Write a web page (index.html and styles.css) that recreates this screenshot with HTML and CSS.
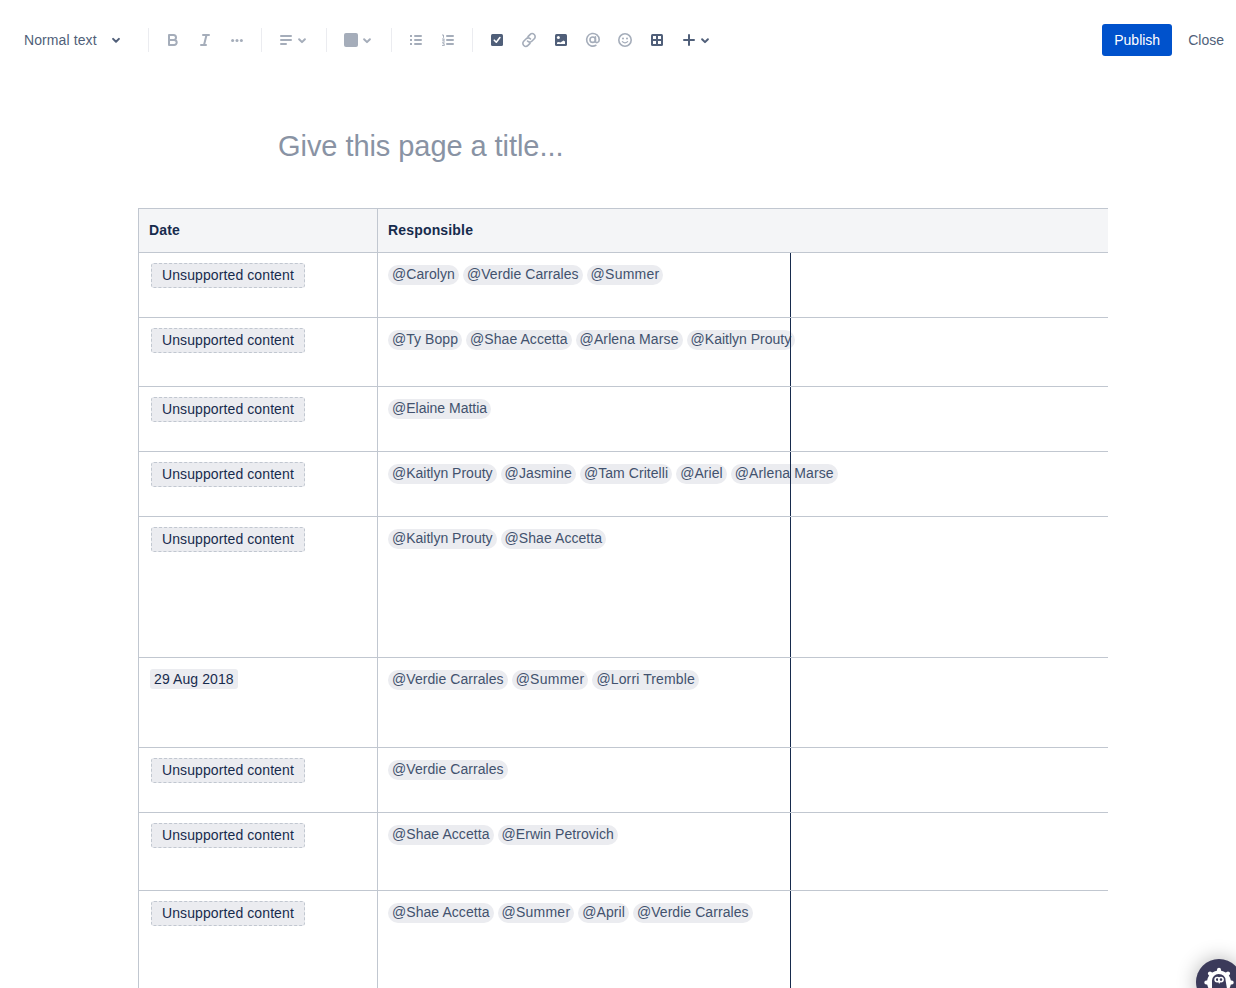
FILE: index.html
```html
<!DOCTYPE html>
<html lang="en">
<head>
<meta charset="utf-8">
<title>Page editor</title>
<link rel="stylesheet" href="styles.css">
</head>
<body>
<header class="toolbar">
  <button class="block-type"><span>Normal text</span><svg width="8" height="6" viewBox="0 0 8 6"><path class="line thick" d="M1.1 1.9 4 4.8l2.9-2.9"/></svg></button>
  <div class="group format muted">
    <svg width="32" height="32" viewBox="0 0 32 32"><path class="line thick" d="M12 11h4.5a2.3 2.3 0 0 1 0 5H12zM12 16h5.2a2.5 2.5 0 0 1 0 5H12z"/></svg>
    <svg width="32" height="32" viewBox="0 0 32 32"><path class="line thick" d="M14 11h6M12 21h5M17.5 11l-2.5 10"/></svg>
    <svg width="32" height="32" viewBox="0 0 32 32"><circle cx="11.6" cy="16.5" r="1.5"/><circle cx="16" cy="16.5" r="1.5"/><circle cx="20.4" cy="16.5" r="1.5"/></svg>
  </div>
  <div class="group align muted">
    <svg width="48" height="32" viewBox="0 0 48 32"><path class="line thick" d="M11 12h10M11 16h10M11 20h5M29.1 15.2l2.9 2.9 2.9-2.9"/></svg>
  </div>
  <div class="group color muted">
    <svg width="48" height="32" viewBox="0 0 48 32"><rect x="9" y="9" width="14" height="14" rx="2"/><path class="line thick" d="M29.1 15.2l2.9 2.9 2.9-2.9"/></svg>
  </div>
  <div class="group lists muted">
    <svg width="32" height="32" viewBox="0 0 32 32"><path class="line thick" d="M15 12h6M15 16h6M15 20h6"/><path d="M10 11h2v2h-2zM10 15h2v2h-2zM10 19h2v2h-2z"/></svg>
    <svg width="32" height="32" viewBox="0 0 32 32"><path class="line thick" d="M15 12h6M15 16h6M15 20h6"/><path class="line thin" d="M10.4 11h1.1v2.4M10.4 15h2L10.6 17h2M10.4 18.8h2l-1 1.2q1.4.1 1 1.4h-2"/></svg>
  </div>
  <div class="group insert">
    <svg width="32" height="32" viewBox="0 0 32 32"><rect x="10" y="10" width="12" height="12" rx="1.5"/><path class="line white" d="m13.3 16.2 2 2 3.6-4.6"/></svg>
    <svg class="muted" width="32" height="32" viewBox="0 0 32 32"><path class="line" d="m15 12.6 2-2a2.9 2.9 0 0 1 4.3 4.2l-2.5 2.5a2.9 2.9 0 0 1-4.3-.2M17 19.4l-2 2a2.9 2.9 0 0 1-4.3-4.2l2.5-2.5a2.9 2.9 0 0 1 4.3.2"/></svg>
    <svg width="32" height="32" viewBox="0 0 32 32"><rect x="10" y="10" width="12" height="12" rx="1.5"/><circle class="cut" cx="13.4" cy="13.5" r="1.5"/><path class="cut" d="M12 20v-1.5l1.8-.6 1.7.6 3-2 1.5 1V20z"/></svg>
    <svg class="muted" width="32" height="32" viewBox="0 0 32 32"><circle class="line" cx="15.7" cy="15.7" r="2.7"/><path class="line" d="M18.4 12.7v4.2c0 2.8 3.8 2.1 3.8-1.2a6.3 6.3 0 1 0-3.3 5.6"/></svg>
    <svg class="muted" width="32" height="32" viewBox="0 0 32 32"><circle class="line" cx="16" cy="16" r="6.2"/><circle cx="14" cy="14.5" r="1"/><circle cx="18" cy="14.5" r="1"/><path class="line fine" d="M13.4 17.6q2.6 2.6 5.2 0"/></svg>
    <svg width="32" height="32" viewBox="0 0 32 32"><rect x="10" y="10" width="12" height="12" rx="1.5"/><path class="cut" d="M12 12h3v3h-3zM17 12h3v3h-3zM12 17h3v3h-3zM17 17h3v3h-3z"/></svg>
    <svg width="48" height="32" viewBox="0 0 48 32"><path class="line thick" d="M16 11v10M11 16h10M29.1 15.2l2.9 2.9 2.9-2.9"/></svg>
  </div>
  <div class="actions"><button class="publish">Publish</button><button class="close">Close</button></div>
</header>
<main>
  <h1 class="title">Give this page a title...</h1>
  <div class="table">
    <div class="row head"><div class="cell">Date</div><div class="cell">Responsible</div></div>
    <div class="row"><div class="cell"><span class="unsupported">Unsupported content</span></div><div class="cell people"><span class="mention">@Carolyn</span><span class="mention">@Verdie Carrales</span><span class="mention wide">@Summer</span></div></div>
    <div class="row h69"><div class="cell"><span class="unsupported">Unsupported content</span></div><div class="cell people"><span class="mention">@Ty Bopp</span><span class="mention">@Shae Accetta</span><span class="mention loose">@Arlena Marse</span><span class="mention snug">@Kaitlyn Prouty</span></div></div>
    <div class="row"><div class="cell"><span class="unsupported">Unsupported content</span></div><div class="cell people"><span class="mention snug">@Elaine Mattia</span></div></div>
    <div class="row"><div class="cell"><span class="unsupported">Unsupported content</span></div><div class="cell people"><span class="mention snug">@Kaitlyn Prouty</span><span class="mention loose">@Jasmine</span><span class="mention">@Tam Critelli</span><span class="mention">@Ariel</span><span class="mention loose">@Arlena Marse</span></div></div>
    <div class="row h141"><div class="cell"><span class="unsupported">Unsupported content</span></div><div class="cell people"><span class="mention snug">@Kaitlyn Prouty</span><span class="mention">@Shae Accetta</span></div></div>
    <div class="row h90"><div class="cell"><span class="date">29 Aug 2018</span></div><div class="cell people"><span class="mention">@Verdie Carrales</span><span class="mention wide">@Summer</span><span class="mention loose">@Lorri Tremble</span></div></div>
    <div class="row"><div class="cell"><span class="unsupported">Unsupported content</span></div><div class="cell people"><span class="mention">@Verdie Carrales</span></div></div>
    <div class="row h78"><div class="cell"><span class="unsupported">Unsupported content</span></div><div class="cell people"><span class="mention">@Shae Accetta</span><span class="mention">@Erwin Petrovich</span></div></div>
    <div class="row h141"><div class="cell"><span class="unsupported">Unsupported content</span></div><div class="cell people"><span class="mention">@Shae Accetta</span><span class="mention wide">@Summer</span><span class="mention">@April</span><span class="mention">@Verdie Carrales</span></div></div>
  </div>
</main>
<div class="helper"><svg width="46" height="46" viewBox="0 0 46 46"><circle class="gear" cx="23" cy="23.5" r="12"/><path class="teeth" d="M23 10.8v25.4M10.3 23.5h25.4M14 14.5l18 18M32 14.5l-18 18"/><path class="ink" d="M16 36V21.5a6.6 6.6 0 0 1 6.6-6.5q6.6 0 7 6.5l2.5 14.5z"/><circle class="eye" cx="21.2" cy="20.6" r="2.1"/><circle class="eye" cx="25" cy="20.6" r="2.1"/><path class="beak" d="m22 22.5 1.2 2.5 1.2-2.5z"/></svg></div>
</body>
</html>
```
FILE: styles.css
```css
* { box-sizing: border-box; }
body {
  margin: 0;
  height: 988px;
  overflow: hidden;
  position: relative;
  background: #fff;
  color: #172b4d;
  font: 14px/20px "Liberation Sans", Arial, sans-serif;
  letter-spacing: .1px;
}
button { border: 0; background: none; padding: 0; font: inherit; color: inherit; letter-spacing: inherit; }
svg { display: block; flex: none; fill: currentColor; }
.line { fill: none; stroke: currentColor; stroke-width: 1.6; stroke-linecap: round; stroke-linejoin: round; }
.thick { stroke-width: 2; }
.thin { stroke-width: 1; }
.fine { stroke-width: 1.3; }
.white { stroke: #fff; }
.cut { fill: #fff; }
.muted { color: #a5adba; }

.toolbar { display: flex; align-items: center; height: 80px; padding: 0 12px 0 24px; color: #505f79; }
.block-type { display: flex; align-items: center; justify-content: space-between; width: 96px; margin-right: 28px; }
.group { display: flex; align-items: center; height: 24px; border-left: 1px solid #ebecf0; padding-left: 8px; }
.format { width: 113px; }
.align { width: 65px; }
.color { width: 65px; }
.lists { width: 81px; }
.format, .align, .color, .lists { flex: none; }
.insert { color: #505f79; }
.actions { display: flex; align-items: center; gap: 16px; margin-left: auto; letter-spacing: 0; }
.publish { width: 70px; height: 32px; border-radius: 3px; background: #0052cc; color: #fff; }

.title { margin: 48px 0 0 278px; height: 80px; font-size: 29px; line-height: 36px; font-weight: 400; letter-spacing: -.06px; color: #8993a4; }

.table { width: 970px; margin-left: 138px; overflow: hidden; border: solid #c1c7d0; border-width: 1px 0 0 1px; }
.row { display: grid; grid-template-columns: 239px 1fr; height: 65px; border-bottom: 1px solid #c1c7d0; }
.h69 { height: 69px; }
.h78 { height: 78px; }
.h90 { height: 90px; }
.h141 { height: 141px; }
.head { height: 44px; background: #f4f5f7; font-weight: 700; letter-spacing: .17px; }
.head .cell { padding-top: 11px; }
.cell { padding: 10px; }
.cell:first-child { border-right: 1px solid #c1c7d0; }
.people { display: flex; align-items: flex-start; gap: 4px; padding-top: 12px; position: relative; }
.people::after { content: ""; position: absolute; top: 0; bottom: 0; left: 412px; width: 1px; background: #172b4d; }
.unsupported { display: block; width: 154px; height: 25px; margin-left: 2px; padding-left: 10px; border: 1px dashed #c1c7d0; border-radius: 3px; background: #ebecf0; line-height: 23px; white-space: nowrap; }
.mention { height: 20px; padding: 0 4px; border-radius: 20px; background: #ebecf0; color: #42526e; line-height: 18px; letter-spacing: .06px; white-space: nowrap; }
.snug { letter-spacing: 0; }
.loose { letter-spacing: .12px; }
.wide { letter-spacing: .24px; }
.date { display: block; width: 88px; height: 20px; margin: 1px 0 0 1px; padding: 0 4px; border-radius: 3px; background: #ebecf0; white-space: nowrap; }

.helper { position: absolute; left: 1196px; top: 959px; width: 46px; height: 46px; border-radius: 50%; background: #3b3a5a; box-shadow: 0 0 20px rgba(0, 0, 0, .3); }
.gear { fill: #fff; }
.teeth { fill: none; stroke: #fff; stroke-width: 4; stroke-linecap: round; }
.ink { fill: #3b3a5a; }
.eye { fill: #3b3a5a; stroke: #fff; stroke-width: 1.6; }
.beak { fill: #fff; }
```
